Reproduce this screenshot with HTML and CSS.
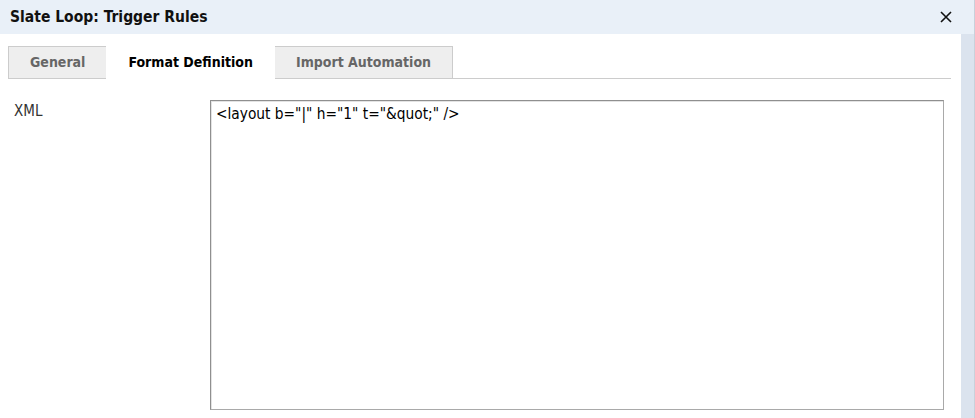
FILE: index.html
```html
<!DOCTYPE html>
<html lang="en">
<head>
  <meta charset="UTF-8">
  <title>Slate Loop: Trigger Rules</title>
  <link rel="stylesheet" href="styles.css">
</head>
<body>
  <div class="window">
    <div class="dialog-header">
      <span class="dialog-title">Slate Loop: Trigger Rules</span>
      <button class="close-button" title="Close">
        <svg width="12" height="12" viewBox="0 0 12 12">
          <path d="M1 1 L11 11 M11 1 L1 11" stroke="#111" stroke-width="1.6" fill="none"/>
        </svg>
      </button>
    </div>
    <div class="dialog-main">
      <div class="content">
        <div class="tabs">
          <div class="tab">General</div>
          <div class="tab active">Format Definition</div>
          <div class="tab">Import Automation</div>
        </div>
        <div class="form-row">
          <label class="field-label" for="xml-input">XML</label>
          <textarea id="xml-input" class="xml-input">&lt;layout b="|" h="1" t="&amp;quot;" /&gt;</textarea>
        </div>
      </div>
      <div class="scrollbar"></div>
    </div>
  </div>
</body>
</html>
```

FILE: styles.css
```css
html, body {
  margin: 0;
  padding: 0;
  background: #fff;
}

body {
  font-family: "DejaVu Sans Condensed", "DejaVu Sans", sans-serif;
  font-size: 14px;
  color: #222;
}

.window {
  width: 975px;
  height: 418px;
  box-sizing: border-box;
  border-right: 1px solid #c9d1db;
  display: flex;
  flex-direction: column;
  overflow: hidden;
}

.dialog-header {
  height: 34px;
  flex: none;
  background: #e9f0f8;
  display: flex;
  align-items: center;
  justify-content: space-between;
  padding: 0 21px 0 10px;
}

.dialog-title {
  font-weight: bold;
  font-size: 15.5px;
  color: #111;
}

.close-button {
  border: none;
  background: none;
  padding: 0;
  width: 14px;
  height: 14px;
  display: flex;
  align-items: center;
  justify-content: center;
  cursor: pointer;
}

.dialog-main {
  flex: 1;
  display: flex;
}

.content {
  flex: 1;
  padding: 12px 10px 0 8px;
}

.scrollbar {
  width: 13px;
  background: #dbe3ee;
}

.tabs {
  display: flex;
  border-bottom: 1px solid #cccccc;
  height: 32px;
}

.tab {
  padding: 0 21px;
  height: 32px;
  box-sizing: border-box;
  line-height: 31px;
  background: #eeeeee;
  border: 1px solid #cccccc;
  border-bottom: none;
  color: #666;
  font-weight: bold;
  font-size: 14px;
  margin-right: -1px;
}

.tab.active {
  background: #fff;
  color: #000;
  height: 33px;
  border-color: #fff;
  position: relative;
  z-index: 1;
}

.form-row {
  display: flex;
  align-items: flex-start;
  padding: 21px 0 0 6px;
}

.field-label {
  width: 196px;
  color: #333;
  font-size: 15px;
  padding-top: 2px;
}

.xml-input {
  width: 734px;
  height: 310px;
  box-sizing: border-box;
  margin: 0;
  padding: 4px 5px;
  font-family: inherit;
  font-size: 15.3px;
  color: #000;
  border: 1px solid #a9a9a9;
  border-top-color: #8f8f8f;
  border-left-color: #8f8f8f;
  box-shadow: inset 1px 1px 0 #e3e3e3;
  resize: none;
  outline: none;
}
```
